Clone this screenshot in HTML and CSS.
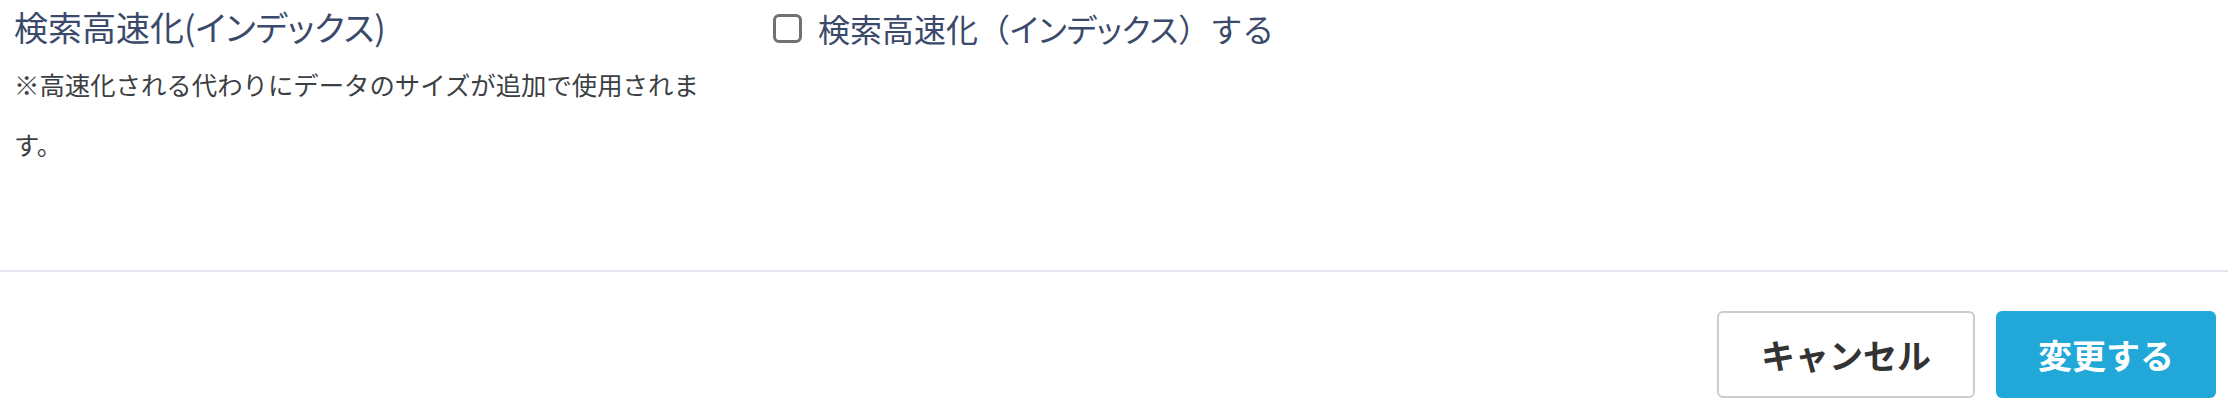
FILE: index.html
```html
<!DOCTYPE html>
<html lang="ja">
<head>
    <meta charset="UTF-8">
    <meta name="viewport" content="width=device-width, initial-scale=1.0">
    <title>検索高速化</title>
    <link rel="stylesheet" href="styles.css">
</head>
<body>
    <div class="setting-row">
        <div class="setting-info">
            <h2 class="setting-title">検索高速化(インデックス)</h2>
            <p class="setting-note">※高速化される代わりにデータのサイズが追加で使用されます。</p>
        </div>
        <div class="setting-field">
            <label class="check-label">
                <input type="checkbox" name="use_index">
                <span>検索高速化（<span class="kana">インデックス</span>）する</span>
            </label>
        </div>
    </div>

    <!-- フッターボタン -->
    <div class="form-footer">
        <button type="button" class="btn btn-cancel">キャンセル</button>
        <button type="submit" class="btn btn-submit">変更する</button>
    </div>
</body>
</html>
```

FILE: styles.css
```css
body, html {
    margin: 0;
    padding: 0;
    background: #fff;
    font-family: "Noto Sans CJK JP", sans-serif;
}

.setting-row {
    display: grid;
    grid-template-columns: 759px 1fr;
    padding: 0 14px;
    height: 270px;
    border-bottom: 2px solid #e4e6f2;
}

.setting-title {
    margin: 0;
    font-size: 34px;
    font-weight: 400;
    line-height: 54px;
    color: #3b4a6b;
    font-feature-settings: "palt";
}

.setting-note {
    margin: 0;
    width: 700px;
    font-size: 25.4px;
    line-height: 60px;
    color: #3c3f44;
}

.setting-field {
    padding-top: 10px;
}

.check-label {
    display: flex;
    align-items: center;
    gap: 16px;
    font-size: 32px;
    line-height: 36px;
    color: #3b4a6b;
}

.check-label .kana {
    font-feature-settings: "palt";
}

.check-label input[type="checkbox"] {
    appearance: none;
    margin: 0;
    width: 29px;
    height: 29px;
    border: 3px solid #717171;
    border-radius: 6px;
    background: #fff;
}

.form-footer {
    display: flex;
    justify-content: flex-end;
    gap: 21px;
    padding: 39px 12px 14px;
}

.btn {
    height: 87px;
    padding: 0 42px;
    font-family: "Noto Sans CJK JP", sans-serif;
    font-size: 34px;
    font-weight: 700;
    border-radius: 6px;
    cursor: pointer;
}

.btn-cancel {
    background: #fff;
    color: #333;
    border: 2px solid #cccccc;
}

.btn-submit {
    background: #21a8d8;
    color: #fff;
    border: none;
}
```
